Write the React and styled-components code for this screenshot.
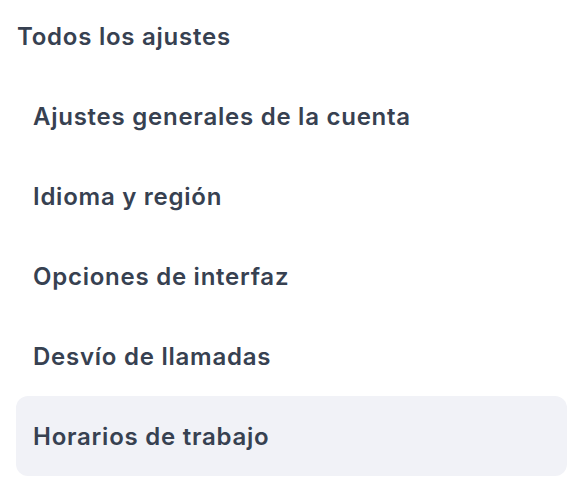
import React from "react";
import styled, { createGlobalStyle } from "styled-components";

const Global = createGlobalStyle`
  html, body { margin: 0; padding: 0; background: #ffffff; }
  body { font-family: Inter, "Noto Sans", sans-serif; color: #374151; }
`;

const Page = styled.div`
  padding: 0 21px 0 16px;
  display: flex;
  flex-direction: column;
`;

const Title = styled.h2`
  margin: 0;
  padding: 16px 0 18px 1px;
  font-size: 24px;
  font-weight: 600;
  line-height: 42px;
  letter-spacing: 0.75px;
  color: #374151;
`;

const List = styled.ul`
  list-style: none;
  margin: 0;
  padding: 0;
  display: flex;
  flex-direction: column;
`;

const Item = styled.li`
  height: 80px;
  display: flex;
  align-items: center;
  padding: 0 17px;
  border-radius: 12px;
  font-size: 24px;
  font-weight: 600;
  letter-spacing: 0.75px;
  color: #374151;
  background: ${(p) => (p.$active ? "#f1f2f7" : "transparent")};
`;

const items = [
  "Ajustes generales de la cuenta",
  "Idioma y región",
  "Opciones de interfaz",
  "Desvío de llamadas",
  "Horarios de trabajo",
];

export default function App() {
  return (
    <>
      <Global />
      <Page>
        <Title>Todos los ajustes</Title>
        <List>
          {items.map((t, i) => (
            <Item key={t} $active={i === items.length - 1}>
              {t}
            </Item>
          ))}
        </List>
      </Page>
    </>
  );
}
